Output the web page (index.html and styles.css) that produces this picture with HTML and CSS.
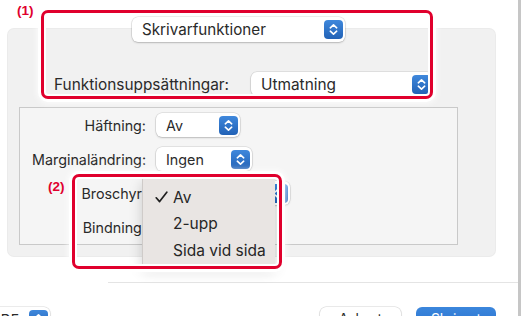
FILE: index.html
```html
<!DOCTYPE html>
<html lang="sv">
<head>
<meta charset="utf-8">
<title>Skrivarfunktioner</title>
<link rel="stylesheet" href="styles.css">
</head>
<body>
<div class="sheet">
  <div class="top-row">
    <div class="popup popup-main">
      <span class="popup-text">Skrivarfunktioner</span>
      <svg class="stepper" viewBox="0 0 19 19"><defs><linearGradient id="g1" x1="0" y1="0" x2="0" y2="1"><stop offset="0" stop-color="#3f88dc"/><stop offset="1" stop-color="#2262b6"/></linearGradient></defs><rect width="19" height="19" rx="4" fill="url(#g1)"/><path d="M6.3 7.8 9.5 4.8 12.7 7.8M6.3 11.2 9.5 14.2 12.7 11.2" fill="none" stroke="#fff" stroke-width="1.6" stroke-linecap="round" stroke-linejoin="round"/></svg>
    </div>
  </div>
  <div class="panel">
    <div class="preset-row">
      <span class="preset-label">Funktionsuppsättningar:</span>
      <div class="popup popup-preset">
        <span class="popup-text">Utmatning</span>
        <svg class="stepper" viewBox="0 0 19 19"><rect width="19" height="19" rx="4" fill="url(#g1)"/><path d="M6.3 7.8 9.5 4.8 12.7 7.8M6.3 11.2 9.5 14.2 12.7 11.2" fill="none" stroke="#fff" stroke-width="1.6" stroke-linecap="round" stroke-linejoin="round"/></svg>
      </div>
    </div>
    <div class="group">
      <div class="row">
        <span class="label">Häftning:</span>
        <div class="popup w-av"><span class="popup-text">Av</span><svg class="stepper" viewBox="0 0 19 19"><rect width="19" height="19" rx="4" fill="url(#g1)"/><path d="M6.3 7.8 9.5 4.8 12.7 7.8M6.3 11.2 9.5 14.2 12.7 11.2" fill="none" stroke="#fff" stroke-width="1.6" stroke-linecap="round" stroke-linejoin="round"/></svg></div>
      </div>
      <div class="row">
        <span class="label">Marginaländring:</span>
        <div class="popup w-ingen"><span class="popup-text">Ingen</span><svg class="stepper" viewBox="0 0 19 19"><rect width="19" height="19" rx="4" fill="url(#g1)"/><path d="M6.3 7.8 9.5 4.8 12.7 7.8M6.3 11.2 9.5 14.2 12.7 11.2" fill="none" stroke="#fff" stroke-width="1.6" stroke-linecap="round" stroke-linejoin="round"/></svg></div>
      </div>
      <div class="row">
        <span class="label">Broschyr:</span>
        <div class="popup w-brosch"><span class="popup-text"></span><svg class="stepper" viewBox="0 0 19 19"><rect width="19" height="19" rx="4" fill="url(#g1)"/><path d="M6.3 7.8 9.5 4.8 12.7 7.8M6.3 11.2 9.5 14.2 12.7 11.2" fill="none" stroke="#fff" stroke-width="1.6" stroke-linecap="round" stroke-linejoin="round"/></svg></div>
      </div>
      <div class="row">
        <span class="label">Bindning:</span>
        <div class="popup w-bind"><span class="popup-text"></span></div>
      </div>
    </div>
  </div>
  <div class="separator"></div>
  <div class="bottom-row">
    <div class="popup popup-pdf"><span class="popup-text pdf-text">PDF</span><svg class="stepper" viewBox="0 0 19 19"><rect width="19" height="19" rx="4" fill="url(#g1)"/><path d="M6.3 7.8 9.5 4.8 12.7 7.8M6.3 11.2 9.5 14.2 12.7 11.2" fill="none" stroke="#fff" stroke-width="1.6" stroke-linecap="round" stroke-linejoin="round"/></svg></div>
    <div class="btn btn-cancel">Avbryt</div>
    <div class="btn btn-print">Skriv ut</div>
  </div>

  <div class="menu">
    <div class="menu-item"><svg class="check" viewBox="0 0 13 12"><path d="M1.2 6.8 4.6 10.6 11.8 1.2" fill="none" stroke="#1f1f1f" stroke-width="1.7" stroke-linecap="round" stroke-linejoin="round"/></svg><span>Av</span></div>
    <div class="menu-item"><span>2-upp</span></div>
    <div class="menu-item"><span>Sida vid sida</span></div>
  </div>

  <span class="callout-num n1">(1)</span>
  <div class="callout c1"></div>
  <span class="callout-num n2">(2)</span>
  <div class="callout c2"></div>
</div>
</body>
</html>
```

FILE: styles.css
```css
* { box-sizing: border-box; }

html, body {
  margin: 0;
  padding: 0;
  background: #ffffff;
}

body {
  width: 525px;
  height: 316px;
  overflow: hidden;
  font-family: "Inter", "Liberation Sans", sans-serif;
  color: #2a2a2a;
}

.sheet {
  position: relative;
  width: 521px;
  height: 316px;
  border-right: 3px solid #c6c6c6;
  overflow: hidden;
}

/* popup buttons */
.popup {
  position: relative;
  display: flex;
  align-items: center;
  height: 24px;
  background: #ffffff;
  border-radius: 6px;
  box-shadow: 0 0 0 0.5px rgba(0,0,0,0.14), 0 1px 2px rgba(0,0,0,0.18);
  padding-left: 10px;
  padding-right: 2px;
}

.popup-text {
  flex: 1;
  white-space: nowrap;
}

.stepper {
  width: 19px;
  height: 19px;
  flex: none;
  display: block;
}

.top-row {
  padding-top: 17px;
  position: relative;
  z-index: 2;
}

.popup-main {
  margin-left: 132px;
  width: 213px;
  height: 25px;
  font-size: 15.2px;
}

.panel {
  margin-top: -13px;
  margin-left: 8px;
  width: 487px;
  height: 227px;
  background: #f1f1f1;
  border-radius: 6px;
  box-shadow: 0 0 0 1px #ebebeb;
  padding: 43px 0 0 11px;
}

.preset-row {
  display: flex;
  align-items: center;
  height: 24px;
  padding-left: 35px;
  font-size: 15.4px;
}

.preset-label {
  width: 197px;
  white-space: nowrap;
}

.popup-preset {
  width: 182px;
}

.group {
  margin-top: 11px;
  width: 439px;
  height: 138px;
  border: 1px solid #c9c9c9;
  background: #f5f5f5;
  padding-top: 5px;
  display: flex;
  flex-direction: column;
  gap: 10px;
  font-size: 14.3px;
}

.row {
  display: flex;
  align-items: center;
  height: 24px;
}

.label {
  width: 126px;
  text-align: right;
  margin-right: 10px;
  white-space: nowrap;
}

.w-av { width: 84px; }
.w-ingen { width: 96px; }
.w-brosch { width: 134px; }
.w-bind { width: 110px; }

.separator {
  margin-top: 26px;
  margin-left: 108px;
  height: 1px;
  background: #e4e4e4;
}

.bottom-row {
  margin-top: 24px;
  display: flex;
  align-items: flex-start;
  font-size: 14px;
}

.popup-pdf {
  margin-left: -36px;
  width: 86px;
  height: 24px;
}

.pdf-text {
  text-align: right;
  padding-right: 10px;
}

.btn {
  height: 22px;
  border-radius: 6px;
  display: flex;
  align-items: center;
  justify-content: center;
  font-size: 14px;
}

.btn-cancel {
  margin-left: 270px;
  width: 81px;
  background: #ffffff;
  box-shadow: 0 0 0 0.5px rgba(0,0,0,0.16), 0 1px 2px rgba(0,0,0,0.16);
}

.btn-print {
  margin-left: 15px;
  width: 80px;
  background: linear-gradient(#3b86dc, #2a72cf);
  color: #ffffff;
}

/* drop-down menu overlay */
.menu {
  position: absolute;
  left: 142px;
  top: 179px;
  width: 133px;
  height: 88px;
  background: #e9e5e3;
  border-left: 1px solid #cfcbc9;
  box-shadow: 0 4px 12px rgba(0,0,0,0.18);
  padding-top: 5px;
  font-size: 15.5px;
  color: #262626;
  z-index: 3;
}

.menu-item {
  position: relative;
  height: 26.5px;
  display: flex;
  align-items: center;
  padding-left: 30px;
}

.check {
  position: absolute;
  left: 12px;
  top: 7px;
  width: 13px;
  height: 12px;
}

/* annotation overlays */
.callout {
  position: absolute;
  border: 3px solid #e0002d;
  border-radius: 7px;
  box-shadow: 0 0 0 3px #ffffff, 0 0 6px 4px rgba(255,255,255,0.8), inset 0 0 0 2px #ffffff;
  z-index: 4;
}

.c1 { left: 41px; top: 10px; width: 392px; height: 89px; }
.c2 { left: 72px; top: 174px; width: 210px; height: 95px; }

.callout-num {
  position: absolute;
  font-family: "Liberation Sans", "Inter", sans-serif;
  font-weight: bold;
  font-size: 13.5px;
  color: #e0002d;
  z-index: 5;
}

.n1 { left: 17px; top: 3px; }
.n2 { left: 48px; top: 179px; }
```
